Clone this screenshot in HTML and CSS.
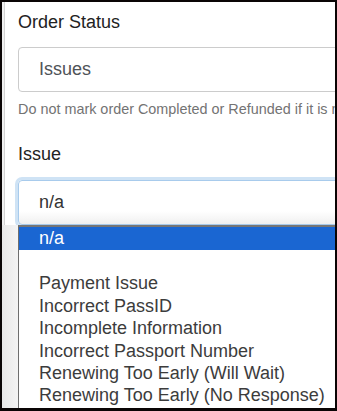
FILE: index.html
```html
<!doctype html>
<html>
<head>
<meta charset="UTF-8">
<meta name="viewport" content="width=device-width,initial-scale=1">
<title>Order Status</title>
<link rel="stylesheet" href="styles.css">
</head>
<body>
<div class="frame">
  <div class="screen">
    <div class="form">
      <div class="label first">Order Status</div>
      <div class="select">Issues</div>
      <div class="help">Do not mark order Completed or Refunded if it is not resolved.</div>

      <div class="label second">Issue</div>
      <div class="field">
        <div class="select focus">n/a</div>
        <ul class="options">
          <li class="picked">n/a</li>
          <li></li>
          <li>Payment Issue</li>
          <li>Incorrect PassID</li>
          <li>Incomplete Information</li>
          <li>Incorrect Passport Number</li>
          <li>Renewing Too Early (Will Wait)</li>
          <li>Renewing Too Early (No Response)</li>
        </ul>
      </div>
    </div>
  </div>
</div>
</body>
</html>
```
FILE: styles.css
```css
body {
	margin: 0;
	padding: 0;
	background: #000;
	font-family: "Liberation Sans", Arial, sans-serif;
}
.frame {
	width: 337px;
	height: 411px;
	box-sizing: border-box;
	padding: 2px 2px 3px 2px;
	background: #0a0505;
}
.screen {
	height: 100%;
	background: #fff;
	overflow: hidden;
	box-shadow: inset 2px 0 #f0f0f0, inset 3px 0 #d2d2d2;
}
.form {
	padding-left: 16px;
	width: 360px;
}
.label {
	font-size: 18px;
	line-height: 20px;
	color: #222;
}
.label.first {
	margin-top: 10px;
}
.label.second {
	margin-top: 25px;
}
.select {
	margin-top: 15px;
	height: 45px;
	box-sizing: border-box;
	border: 1px solid #ccc;
	border-radius: 4px;
	padding-left: 20px;
	font-size: 18px;
	line-height: 43px;
	color: #4f5358;
	background: #fff;
}
.help {
	margin-top: 7px;
	font-size: 14.4px;
	line-height: 20px;
	color: #737373;
	white-space: nowrap;
}
.field {
	position: relative;
	margin-top: 16px;
}
.field .select {
	margin-top: 0;
}
.select.focus {
	color: #333;
	border-color: #a8cbec;
	box-shadow: 0 0 0 3px #cfe3f5;
	background: linear-gradient(to bottom, #fff 70%, #f0f0f0);
}
.options {
	position: absolute;
	top: 45px;
	left: 0;
	width: 340px;
	height: 200px;
	margin: 0;
	padding: 0;
	list-style: none;
	background: #fff;
	border-top: 2px solid #767676;
	border-left: 1px solid #6e6e6e;
	font-size: 18px;
	color: #3c3c3c;
}
.options::before {
	content: "";
	position: absolute;
	top: -2px;
	left: -17px;
	width: 16px;
	height: 210px;
	background: linear-gradient(to right, #e8e8e8, #f4f4f4);
}
.options li {
	height: 22.4px;
	line-height: 22.4px;
	padding-left: 20px;
}
.options li.picked {
	height: 23px;
	line-height: 22px;
	background: #1a66d2;
	color: #fff;
}
```
